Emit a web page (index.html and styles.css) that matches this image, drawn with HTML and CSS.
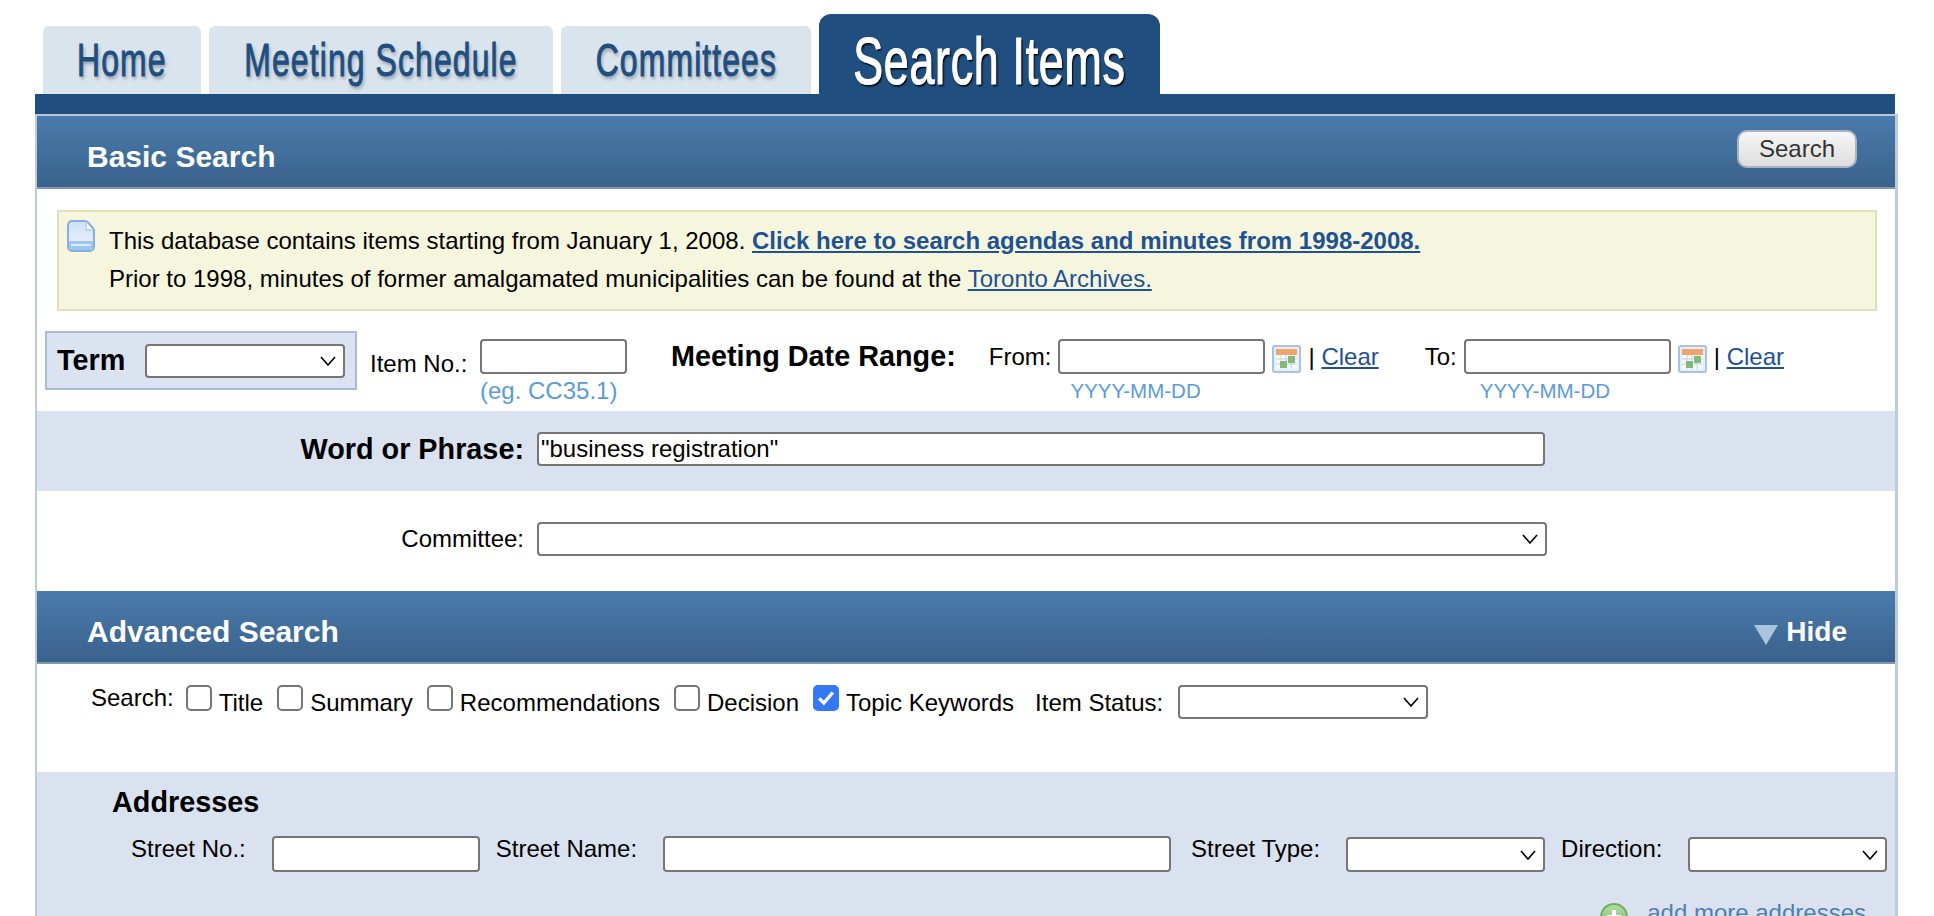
FILE: index.html
```html
<!DOCTYPE html>
<html lang="en">
<head>
<meta charset="utf-8">
<title>Search Items</title>
<link rel="stylesheet" href="styles.css">
</head>
<body>
<div class="page">
  <nav class="tabs">
    <a class="tab tab-home"><span>Home</span></a>
    <a class="tab tab-meeting"><span>Meeting Schedule</span></a>
    <a class="tab tab-committees"><span>Committees</span></a>
    <a class="tab tab-active"><span>Search Items</span></a>
  </nav>
  <div class="tabbar"></div>
  <main class="panel">
    <header class="head head-basic">
      <h2>Basic Search</h2>
      <button class="search-btn" type="button">Search</button>
    </header>
    <div class="notice">
      <svg class="doc-icon" viewBox="0 0 28 32" width="28" height="32">
        <defs><linearGradient id="docfill" x1="0" y1="0" x2="0" y2="1"><stop offset="0" stop-color="#cfe0f6"/><stop offset="1" stop-color="#eef4fc"/></linearGradient></defs>
        <path d="M5 1h13c1 0 2 .5 3 1.500l5 5.500c.7.800 1 1.500 1 2.500v16.500a4 4 0 0 1-4 4H5a4 4 0 0 1-4-4V5a4 4 0 0 1 4-4z" fill="url(#docfill)" stroke="#86aede" stroke-width="2"/>
        <path d="M19 2v8h7" fill="#f2f6fc" stroke="#b3cbea" stroke-width="1.500"/>
        <rect x="2" y="21" width="24" height="9" fill="#9cc6f0"/>
        <rect x="4" y="24" width="20" height="2" fill="#dcebfa"/>
      </svg>
      <div class="notice-text">
        <p>This database contains items starting from January 1, 2008. <a class="link strong-link">Click here to search agendas and minutes from 1998-2008.</a></p>
        <p>Prior to 1998, minutes of former amalgamated municipalities can be found at the <a class="link">Toronto Archives.</a></p>
      </div>
    </div>
    <section class="filters">
      <div class="term">
        <label>Term</label>
        <select class="sel sel-term"><option></option></select>
      </div>
      <div class="itemno">
        <label class="lbl">Item No.:</label>
        <div class="stack">
          <input class="inp inp-item" type="text">
          <span class="hint hint-item">(eg. CC35.1)</span>
        </div>
      </div>
      <div class="range-title">Meeting Date Range:</div>
      <div class="date date-from">
        <label class="date-lbl">From:</label>
        <div class="stack">
          <input class="inp inp-date" type="text">
          <span class="hint hint-date">YYYY-MM-DD</span>
        </div>
        <svg class="cal" viewBox="0 0 29 28" width="29" height="28"><use href="#calendar"/></svg>
        <span class="clear">| <a class="link">Clear</a></span>
      </div>
      <div class="date date-to">
        <label class="date-lbl">To:</label>
        <div class="stack">
          <input class="inp inp-date" type="text">
          <span class="hint hint-date">YYYY-MM-DD</span>
        </div>
        <svg class="cal" viewBox="0 0 29 28" width="29" height="28"><use href="#calendar"/></svg>
        <span class="clear">| <a class="link">Clear</a></span>
      </div>
    </section>
    <section class="band-word">
      <label class="word-lbl">Word or Phrase:</label>
      <input class="inp inp-word" type="text" value="&quot;business registration&quot;">
    </section>
    <section class="committee">
      <label class="committee-lbl">Committee:</label>
      <select class="sel sel-committee"><option></option></select>
    </section>
    <header class="head head-adv">
      <h2>Advanced Search</h2>
      <div class="hide">
        <svg class="tri" viewBox="0 0 24 20" width="24" height="20"><path d="M0 0h24L12 20z" fill="#aac4de"/></svg>
        <span>Hide</span>
      </div>
    </header>
    <section class="options">
      <span class="opt-title">Search:</span>
      <label class="opt"><input type="checkbox"><span>Title</span></label>
      <label class="opt"><input type="checkbox"><span>Summary</span></label>
      <label class="opt"><input type="checkbox"><span>Recommendations</span></label>
      <label class="opt"><input type="checkbox"><span>Decision</span></label>
      <label class="opt"><input type="checkbox" checked><span>Topic Keywords</span></label>
      <span class="status-lbl">Item Status:</span>
      <select class="sel sel-status"><option></option></select>
    </section>
    <section class="addresses">
      <h3>Addresses</h3>
      <div class="addr-row">
        <label class="addr-lbl">Street No.:</label>
        <input class="inp inp-no" type="text">
        <label class="addr-lbl">Street Name:</label>
        <input class="inp inp-name" type="text">
        <label class="addr-lbl">Street Type:</label>
        <select class="sel sel-addr"><option></option></select>
        <label class="addr-lbl">Direction:</label>
        <select class="sel sel-addr sel-last"><option></option></select>
      </div>
      <div class="add-more">
        <svg viewBox="0 0 28 28" width="28" height="28">
          <defs><linearGradient id="addfill" x1="0" y1="0" x2="0" y2="1"><stop offset="0" stop-color="#b4dca2"/><stop offset="1" stop-color="#7dbd68"/></linearGradient></defs>
          <circle cx="14" cy="14" r="13" fill="url(#addfill)" stroke="#74ae60" stroke-width="2"/>
          <path d="M14 7v14M7 14h14" stroke="#fff" stroke-width="4"/>
        </svg>
        <a class="more-link">add more addresses</a>
      </div>
    </section>
  </main>
</div>
<svg class="defs" width="0" height="0">
  <symbol id="calendar" viewBox="0 0 29 28">
    <rect x="1" y="1" width="27" height="26" rx="2" fill="#e6eef8" stroke="#a8c2e4" stroke-width="2"/>
    <rect x="4" y="4" width="21" height="6" fill="#f2a36a"/>
    <rect x="4" y="10" width="21" height="14" fill="#f5f8fc"/>
    <path d="M4 14h21M4 19h21M9 10v14M14 10v14M19 10v14" stroke="#c4d4e8" stroke-width="1"/>
    <rect x="8" y="16" width="7" height="7" fill="#84b87a"/>
    <rect x="16" y="11" width="7" height="7" fill="#84b87a"/>
  </symbol>
</svg>
</body>
</html>
```
FILE: styles.css
```css
* { box-sizing: border-box; }
html, body { margin: 0; padding: 0; background: #fff; }
body { font-family: "Liberation Sans", Arial, sans-serif; font-size: 24px; color: #000; line-height: 28px; }
p, h2, h3 { margin: 0; }
.page { width: 1934px; height: 916px; overflow: hidden; padding-top: 14px; }
.defs { position: absolute; }

/* tabs */
.tabs { display: flex; align-items: flex-end; gap: 8px; height: 80px; margin-left: 43px; }
.tab { display: flex; align-items: center; justify-content: center; height: 68px; background: #d9e4ec; border-radius: 6px 6px 0 0; color: #1f4e7f; }
.tab span { display: inline-block; font-family: "Liberation Sans", sans-serif; font-size: 47px; line-height: 60px; letter-spacing: 1.6px; white-space: nowrap; -webkit-text-stroke: 1px currentColor; text-shadow: 2px 3px 4px rgba(40, 60, 90, .4); transform: scaleX(.68); }
.tab-home { width: 158px; }
.tab-meeting { width: 344px; }
.tab-committees { width: 250px; }
.tab-active { width: 341px; height: 80px; background: #1f4e7f; border-radius: 12px 12px 0 0; color: #fff; }
.tab-active span { margin-top: 14px; font-size: 66px; line-height: 76px; letter-spacing: 1px; -webkit-text-stroke: 1.2px currentColor; text-shadow: 2px 2px 2px #000; }
.tabbar { width: 1860px; height: 20px; margin-left: 35px; background: #1f4e7f; }

/* panel */
.panel { width: 1863px; margin-left: 35px; border-top: 2px solid #b9c9d9; border-left: 2px solid #bccbdc; border-right: 3px solid #bccbdc; }
.head { display: flex; align-items: center; justify-content: space-between; background: linear-gradient(#4a7bad, #3a628b); border-bottom: 2px solid #7e99b5; color: #fff; padding-top: 11px; padding-left: 50px; }
.head h2 { font-size: 30px; line-height: 36px; font-weight: 700; }
.head-basic { height: 73px; padding-right: 38px; }
.head-adv { height: 73px; padding-right: 48px; }
.search-btn { width: 120px; height: 38px; margin-top: -16px; padding: 0; font: 24px "Liberation Sans", sans-serif; color: #333; background: linear-gradient(#f6f6f6, #dedede); border: 2px solid #a9b4bf; border-radius: 10px; }

/* notice */
.notice { display: flex; gap: 14px; margin: 21px 18px 0 20px; padding: 8px 0 11px 8px; height: 101px; background: #f6f6de; border: 2px solid #e0e0ba; }
.notice-text { padding-top: 2px; }
.notice-text p { line-height: 38px; }
.doc-icon { flex: none; }
.link { color: #1f5294; text-decoration: underline; }
.strong-link { font-weight: 700; }

/* filters */
.filters { display: flex; align-items: flex-start; height: 100px; }
.term { display: flex; align-items: center; width: 312px; height: 59px; margin: 20px 0 0 8px; padding-left: 10px; background: #dbe2f0; border: 2px solid #a9bbd6; }
.term label { width: 88px; margin-top: -2px; font-size: 28.8px; font-weight: 700; }
.inp, .sel { display: block; margin: 0; padding: 0 2px; font: 24px "Liberation Sans", sans-serif; color: #000; background-color: #fff; border: 2px solid #767676; border-radius: 4px; outline: none; }
.sel { appearance: none; -webkit-appearance: none; height: 34px; background-image: url("data:image/svg+xml;utf8,<svg xmlns='http://www.w3.org/2000/svg' width='16' height='10' viewBox='0 0 16 10'><path d='M1 1l7 8 7-8' fill='none' stroke='%23000' stroke-width='1.6'/></svg>"); background-repeat: no-repeat; background-position: right 7px center; }
.sel-term { width: 200px; }
.itemno { display: flex; margin: 28px 0 0 13px; }
.lbl { width: 110px; padding-top: 11px; }
.stack { display: flex; flex-direction: column; }
.inp-item { width: 147px; height: 35px; }
.hint { margin-top: 3px; color: #5b9bd8; white-space: nowrap; }
.hint-date { margin-left: 12px; font-size: 20.5px; }
.date-to .hint-date { margin-left: 16px; }
.range-title { margin: 28px 0 0 44px; font-size: 28.8px; line-height: 34px; font-weight: 700; white-space: nowrap; }
.date { display: flex; margin-top: 28px; }
.date-from { margin-left: 33px; }
.date-to { margin-left: 46px; }
.date-lbl { line-height: 36px; }
.date-from .date-lbl { margin-right: 7px; }
.date-to .date-lbl { margin-right: 7px; }
.inp-date { width: 207px; height: 35px; }
.cal { flex: none; margin: 6px 0 0 7px; }
.clear { margin-left: 7px; line-height: 36px; white-space: pre; }

/* word and committee */
.band-word { display: flex; align-items: center; height: 80px; padding-bottom: 4px; background: #dbe2ef; }
.word-lbl { width: 487px; margin-right: 13px; text-align: right; font-size: 28.8px; font-weight: 700; }
.inp-word { width: 1008px; height: 34px; }
.committee { display: flex; align-items: flex-start; height: 100px; padding-top: 31px; }
.committee-lbl { width: 487px; margin-right: 13px; text-align: right; line-height: 34px; }
.sel-committee { width: 1010px; }
.hide { display: flex; align-items: center; gap: 8px; font-size: 28px; font-weight: 700; }
.tri { margin-top: 6px; }

/* options */
.options { display: flex; align-items: flex-start; height: 108px; padding: 21px 0 0 54px; }
.opt-title { margin: -1px 12px 0 0; }
.opt { display: flex; gap: 7px; margin-right: 14px; }
.opt span { padding-top: 4px; white-space: nowrap; }
.opt input { appearance: none; -webkit-appearance: none; flex: none; width: 26px; height: 26px; margin: 0; background: #fff; border: 2px solid #767676; border-radius: 5px; }
.opt input:checked { background: #3478f6 url("data:image/svg+xml;utf8,<svg xmlns='http://www.w3.org/2000/svg' viewBox='0 0 26 26'><path d='M5 13.500l5.500 5.500L21 6.500' fill='none' stroke='%23fff' stroke-width='4'/></svg>") center / 100% no-repeat; border-color: #3478f6; }
.status-lbl { margin: 4px 15px 0 7px; white-space: nowrap; }
.sel-status { width: 250px; }

/* addresses */
.addresses { height: 200px; padding-top: 13px; background: #dbe2ef; }
.addresses h3 { margin-left: 75px; font-size: 28.8px; line-height: 34px; font-weight: 700; }
.addr-row { display: flex; align-items: flex-start; margin-top: 15px; padding-left: 94px; }
.addr-row > * { flex: none; }
.addr-lbl { padding-top: 1px; white-space: nowrap; }
.addr-row .inp { height: 36px; margin: 2px 16px 0 26px; }
.addr-row .inp-name { margin-right: 20px; }
.addr-row .sel { height: 35px; margin: 3px 16px 0 26px; }
.addr-row .sel-last { margin-right: 0; }
.inp-no { width: 208px; }
.inp-name { width: 508px; }
.sel-addr { width: 199px; }
.add-more { display: flex; gap: 19px; justify-content: flex-end; margin-top: 27px; padding-right: 29px; }
.add-more svg { margin-top: 4px; }
.more-link { color: #4f7fb3; text-decoration: underline; }
```
